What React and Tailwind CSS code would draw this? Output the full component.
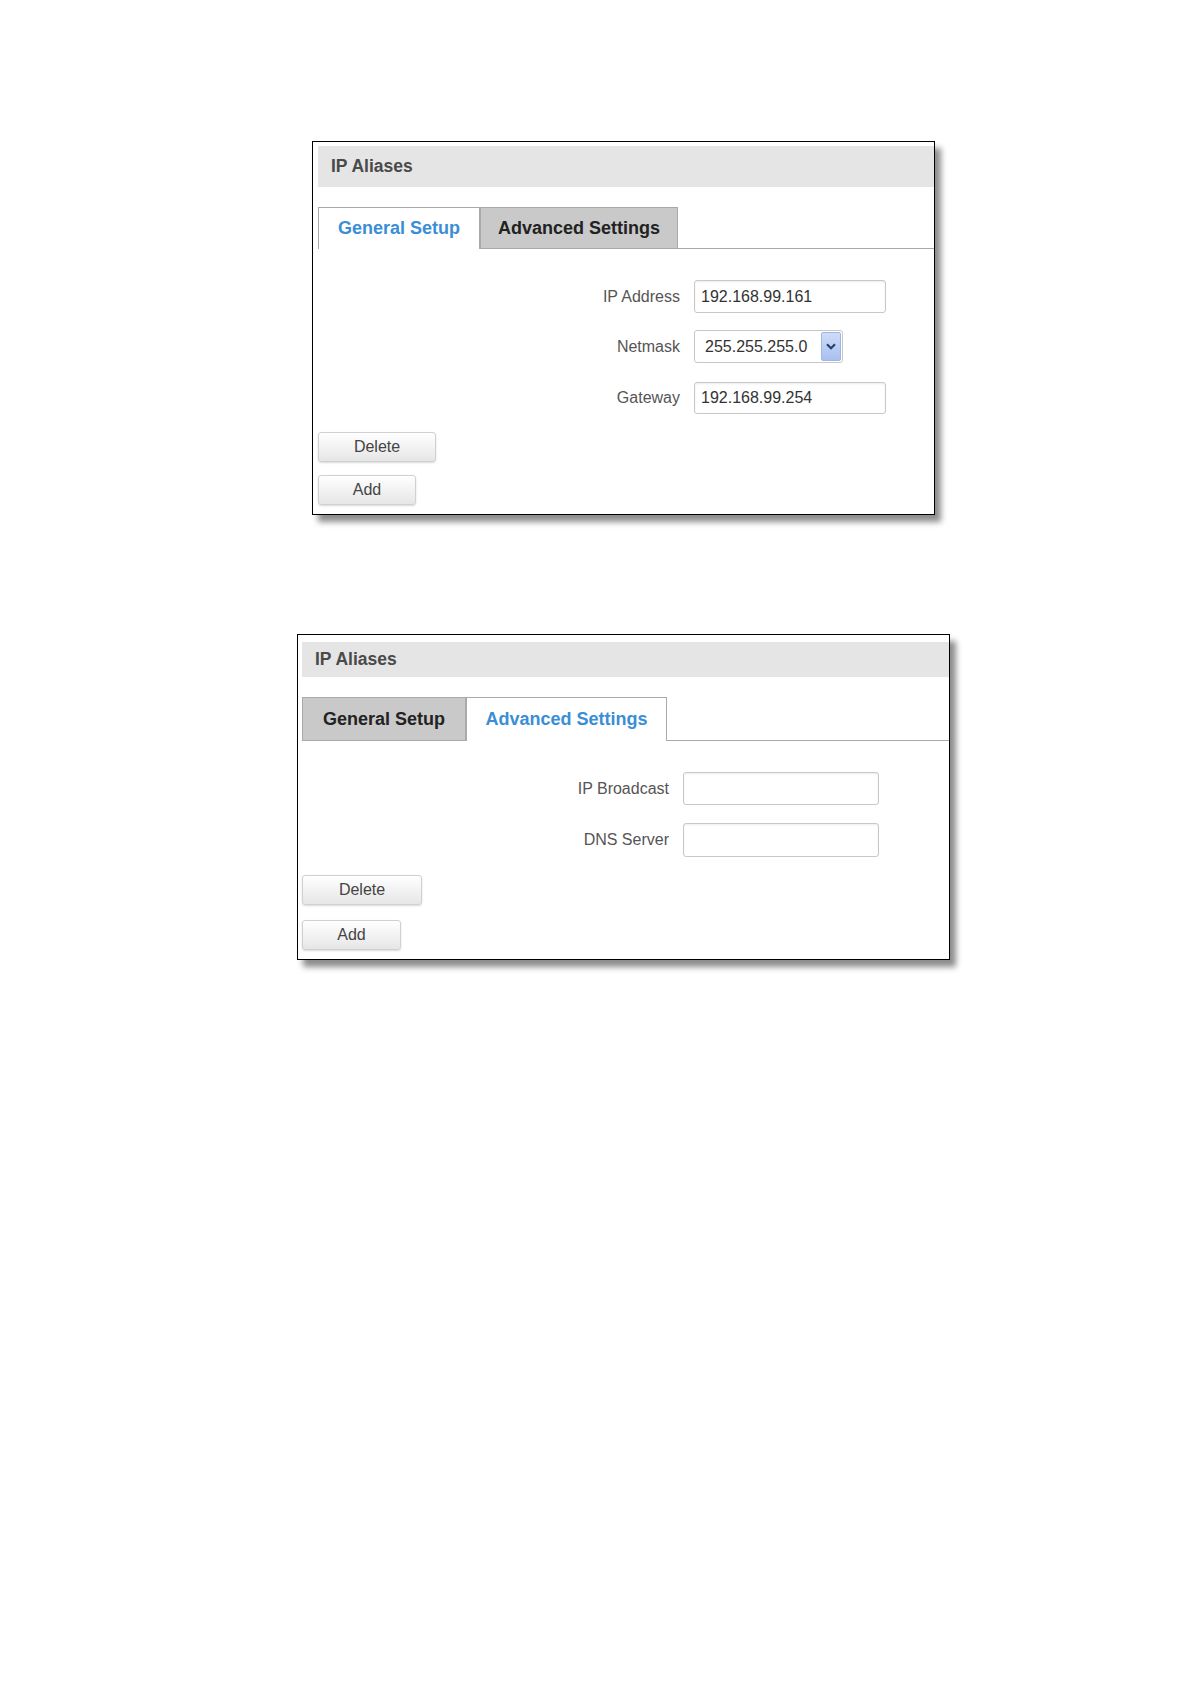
import React from "react";

const font = { fontFamily: '"Liberation Sans", Arial, sans-serif' };

const Field = ({ label, value, labelW, inputW, h, className = "" }) => (
  <div className={`flex items-center ${className}`}>
    <div className={`${labelW} shrink-0 pr-[14px] text-right text-[16px] text-[#555]`}>{label}</div>
    <div
      className={`${inputW} ${h} flex items-center rounded-[3px] border border-[#c8c8c8] bg-white pl-[6px] text-[16px] text-[#333] shadow-[inset_0_1px_2px_rgba(0,0,0,0.08)]`}
    >
      {value}
    </div>
  </div>
);

const Netmask = ({ labelW }) => (
  <div className="mt-[17px] flex items-center">
    <div className={`${labelW} shrink-0 pr-[14px] text-right text-[16px] text-[#555]`}>Netmask</div>
    <div className="flex h-[33px] w-[149px] items-center justify-between rounded-[3px] border border-[#c8c8c8] bg-white pl-[10px] pr-px text-[16px] text-[#333]">
      <span>255.255.255.0</span>
      <span className="flex h-[29px] w-[20px] items-center justify-center rounded-[2px] border border-[#9fb6e6] bg-gradient-to-b from-[#cddcf8] to-[#a9c0ef]">
        <svg width="10" height="7" viewBox="0 0 10 7">
          <path d="M1 1.2 L5 5.2 L9 1.2" fill="none" stroke="#27416f" strokeWidth="2.2" />
        </svg>
      </span>
    </div>
  </div>
);

const Btn = ({ children, w }) => (
  <div
    className={`${w} flex h-[30px] items-center justify-center rounded-[3px] border border-[#d0d0d0] bg-gradient-to-b from-white to-[#e6e6e6] text-[16px] text-[#444] shadow-[0_1px_2px_rgba(0,0,0,0.15)]`}
  >
    {children}
  </div>
);

const Tab = ({ active, children, w }) =>
  active ? (
    <div
      className={`${w} flex h-full items-center justify-center border border-b-0 border-[#aaa] bg-white text-[18px] font-bold text-[#3a8ed6]`}
    >
      {children}
    </div>
  ) : (
    <div
      className={`${w} flex h-full items-center justify-center border border-[#aaa] bg-[#c9c9c9] text-[18px] font-bold text-[#222]`}
    >
      {children}
    </div>
  );

export default function App() {
  return (
    <div className="min-h-[1684px] bg-white pt-[141px]" style={font}>
      {/* first panel: General Setup */}
      <div className="ml-[312px] h-[374px] w-[623px] border border-black bg-white pl-[5px] pt-[4px] shadow-[6px_7px_6px_rgba(0,0,0,0.45)]">
        <div className="flex h-[41px] items-center bg-[#e5e5e5] pl-[13px] text-[17.5px] font-bold text-[#4a4a4a]">
          IP Aliases
        </div>
        <div className="mt-[20px] flex h-[42px] items-end">
          <Tab active w="w-[162px]">General Setup</Tab>
          <Tab w="w-[198px]">Advanced Settings</Tab>
          <div className="flex-1 border-b border-[#aaa]" />
        </div>
        <div className="mt-[31px] flex flex-col">
          <Field label="IP Address" value="192.168.99.161" labelW="w-[376px]" inputW="w-[192px]" h="h-[33px]" />
          <Netmask labelW="w-[376px]" />
          <Field
            className="mt-[19px]"
            label="Gateway"
            value="192.168.99.254"
            labelW="w-[376px]"
            inputW="w-[192px]"
            h="h-[32px]"
          />
        </div>
        <div className="mt-[18px] flex flex-col gap-[13px]">
          <Btn w="w-[118px]">Delete</Btn>
          <Btn w="w-[98px]">Add</Btn>
        </div>
      </div>

      {/* second panel: Advanced Settings */}
      <div className="ml-[297px] mt-[119px] h-[326px] w-[653px] border border-black bg-white pl-[4px] pt-[7px] shadow-[6px_7px_6px_rgba(0,0,0,0.45)]">
        <div className="flex h-[35px] items-center bg-[#e5e5e5] pl-[13px] text-[17.5px] font-bold text-[#4a4a4a]">
          IP Aliases
        </div>
        <div className="mt-[20px] flex h-[44px] items-end">
          <Tab w="w-[164px]">General Setup</Tab>
          <Tab active w="w-[201px]">Advanced Settings</Tab>
          <div className="flex-1 border-b border-[#aaa]" />
        </div>
        <div className="mt-[31px] flex flex-col gap-[18px]">
          <Field label="IP Broadcast" value="" labelW="w-[381px]" inputW="w-[196px]" h="h-[33px]" />
          <Field label="DNS Server" value="" labelW="w-[381px]" inputW="w-[196px]" h="h-[34px]" />
        </div>
        <div className="mt-[18px] flex flex-col gap-[15px]">
          <Btn w="w-[120px]">Delete</Btn>
          <Btn w="w-[99px]">Add</Btn>
        </div>
      </div>
    </div>
  );
}
